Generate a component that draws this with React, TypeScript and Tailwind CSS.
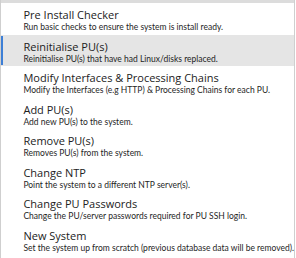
import React from "react";

const items = [
  { title: "Pre Install Checker", desc: "Run basic checks to ensure the system is install ready." },
  { title: "Reinitialise PU(s)", desc: "Reinitialise PU(s) that have had Linux/disks replaced.", active: true },
  { title: "Modify Interfaces & Processing Chains", desc: "Modify the Interfaces (e.g HTTP) & Processing Chains for each PU." },
  { title: "Add PU(s)", desc: "Add new PU(s) to the system." },
  { title: "Remove PU(s)", desc: "Removes PU(s) from the system." },
  { title: "Change NTP", desc: "Point the system to a different NTP server(s)." },
  { title: "Change PU Passwords", desc: "Change the PU/server passwords required for PU SSH login." },
  { title: "New System", desc: "Set the system up from scratch (previous database data will be removed)." },
];

export default function App() {
  return (
    <div className="w-[296px] h-[258px] bg-white overflow-hidden flex">
      {/* sliver of the window behind the menu */}
      <div className="w-[3px] flex flex-col bg-[#f3f3f3]">
        <div className="h-[8px] bg-[#e8833a]" />
      </div>
      <div className="flex-1 flex flex-col border-l border-r border-[#cfcfcf] mr-px">
        <div className="h-[3px] bg-[#dcdcdc]" />
        {items.map((it) => (
          <div
            key={it.title}
            className={`relative h-[31.5px] pl-[22px] pt-[4px] ${it.active ? "bg-[#e5e5e5]" : ""}`}
          >
            {it.active && <div className="absolute left-0 top-[1px] bottom-[1px] w-[2px] bg-[#3d7fd6]" />}
            <div className="font-['Open_Sans',sans-serif] text-[11px] leading-[15px] text-[#222] whitespace-nowrap">{it.title}</div>
            <div className="font-['Lato',sans-serif] text-[8.5px] leading-[11px] text-[#1e1e1e] whitespace-nowrap">{it.desc}</div>
          </div>
        ))}
      </div>
    </div>
  );
}
